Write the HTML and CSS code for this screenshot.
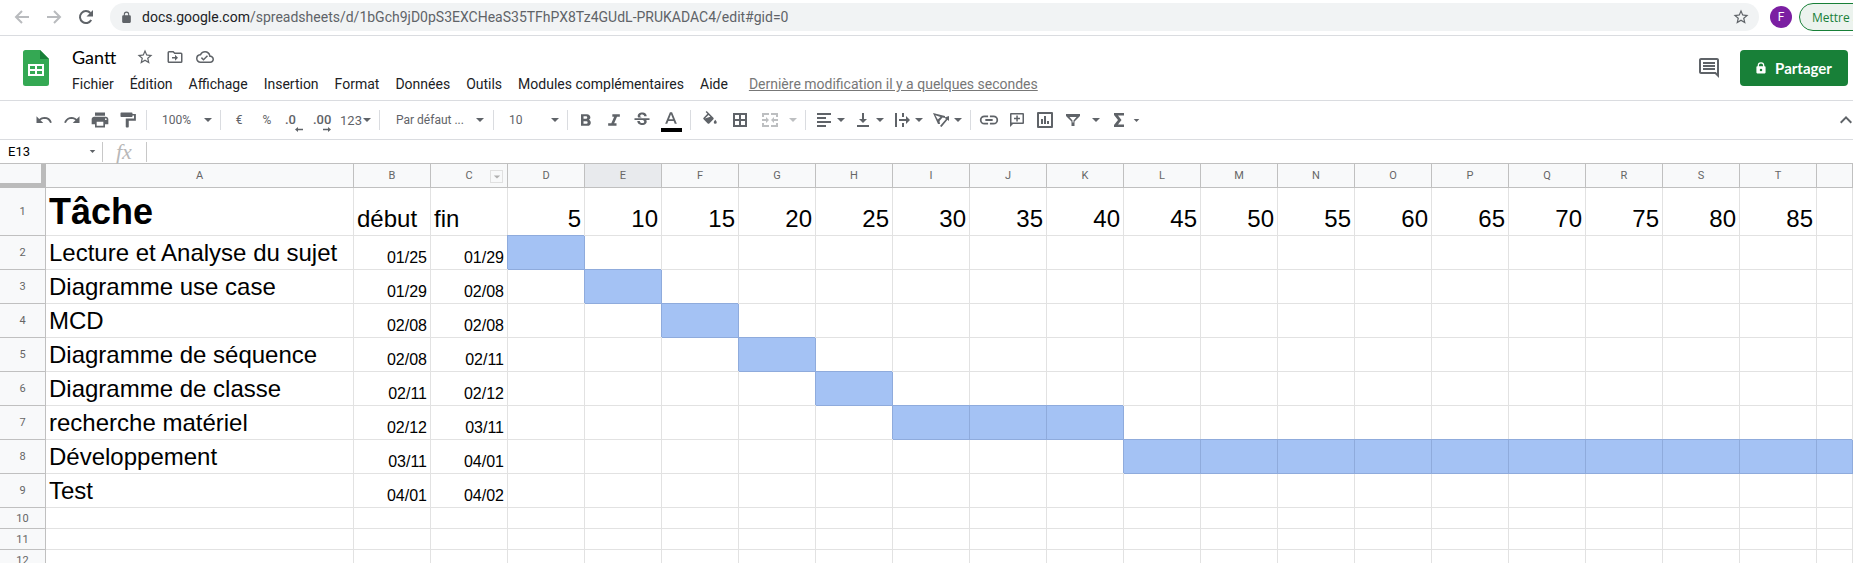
FILE: index.html
```html
<!DOCTYPE html>
<html lang="fr">
<head>
<meta charset="utf-8">
<title>Gantt</title>
<link rel="stylesheet" href="styles.css">
</head>
<body>
<svg class="defs" aria-hidden="true">
  <symbol id="caret" viewBox="0 0 10 10"><path d="M1 3h8L5 7z"/></symbol>
  <symbol id="star" viewBox="0 0 24 24"><path d="M22 9.24l-7.19-.62L12 2 9.19 8.63 2 9.24l5.46 4.73L5.82 21 12 17.27 18.18 21l-1.63-7.03L22 9.24zM12 15.4l-3.76 2.27 1-4.28-3.32-2.88 4.38-.38L12 6.1l1.71 4.04 4.38.38-3.32 2.88 1 4.28L12 15.4z"/></symbol>
  <symbol id="lock" viewBox="0 0 24 24"><path d="M18 8h-1V6A5 5 0 0 0 7 6v2H6a2 2 0 0 0-2 2v10c0 1.1.9 2 2 2h12a2 2 0 0 0 2-2V10a2 2 0 0 0-2-2zM9 6a3 3 0 0 1 6 0v2H9z"/></symbol>
</svg>

<div class="browser">
  <button class="nav nav-off" aria-label="Précédent"><svg viewBox="0 0 16 16"><path class="line" d="M15 8H2M8 2L2 8l6 6"/></svg></button>
  <button class="nav nav-off" aria-label="Suivant"><svg viewBox="0 0 16 16"><path class="line" d="M1 8h13M8 2l6 6-6 6"/></svg></button>
  <button class="nav" aria-label="Actualiser"><svg viewBox="0 0 16 16"><path class="line" d="M13.2 11A6 6 0 1 1 12.4 4"/><path d="M15 1v6.500H8.500z"/></svg></button>
  <div class="address">
    <svg class="address-lock"><use href="#lock"/></svg>
    <span class="url"><b>docs.google.com</b>/spreadsheets/d/1bGch9jD0pS3EXCHeaS35TFhPX8Tz4GUdL-PRUKADAC4/edit#gid=0</span>
    <button class="icon" aria-label="Ajouter aux favoris"><svg class="s18"><use href="#star"/></svg></button>
  </div>
  <button class="avatar">F</button>
  <div class="update-slot"><button class="update">Mettre à jour</button></div>
</div>

<header class="header">
  <svg class="logo" viewBox="0 0 26 36"><path fill="#34a853" d="M2.500 0H17l9 9v24.500a2.500 2.500 0 0 1-2.500 2.500h-21A2.500 2.500 0 0 1 0 33.500v-31A2.500 2.500 0 0 1 2.500 0z"/><path fill="#188038" d="M17 0l9 9h-9z"/><path fill="#fff" fill-rule="evenodd" d="M5 14h16v12H5zM7 16v3h5v-3zM14 16v3h5v-3zM7 21v3h5v-3zM14 21v3h5v-3z"/></svg>
  <div class="doc">
    <div class="title-row">
      <h1 class="title">Gantt</h1>
      <button class="icon" aria-label="Suivre"><svg class="s18"><use href="#star"/></svg></button>
      <button class="icon" aria-label="Déplacer"><svg class="s18" viewBox="0 0 24 24"><path d="M20 6h-8l-2-2H4a2 2 0 0 0-2 2v12c0 1.100.9 2 2 2h16a2 2 0 0 0 2-2V8a2 2 0 0 0-2-2zm0 12H4V6h5.200l2 2H20zM12 17l4-4-4-4v3H8v2h4z"/></svg></button>
      <button class="icon" aria-label="État du document"><svg class="s18" viewBox="0 0 24 24"><path d="M19.350 10.040A7.490 7.490 0 0 0 12 4C9.110 4 6.600 5.640 5.350 8.040A5.994 5.994 0 0 0 0 14c0 3.310 2.690 6 6 6h13c2.760 0 5-2.240 5-5 0-2.640-2.050-4.780-4.650-4.960zM19 18H6c-2.210 0-4-1.790-4-4 0-2.050 1.530-3.760 3.560-3.970l1.070-.11.5-.95A5.469 5.469 0 0 1 12 6c2.620 0 4.880 1.860 5.390 4.430l.3 1.500 1.530.11A2.980 2.980 0 0 1 22 15c0 1.650-1.350 3-3 3zm-9-3.820l-2.090-2.090L6.500 13.500 10 17l6.010-6.010-1.410-1.410z"/></svg></button>
    </div>
    <nav class="menu">
      <button>Fichier</button><button>Édition</button><button>Affichage</button><button>Insertion</button><button>Format</button><button>Données</button><button>Outils</button><button>Modules complémentaires</button><button>Aide</button>
      <a class="history" href="#">Dernière modification il y a quelques secondes</a>
    </nav>
  </div>
  <button class="icon comments" aria-label="Commentaires"><svg class="s24" viewBox="0 0 24 24"><path d="M21.990 4c0-1.100-.89-2-1.990-2H4c-1.100 0-2 .9-2 2v12c0 1.100.9 2 2 2h14l4 4-.01-18zM20 4v13.170L18.830 16H4V4h16zM6 12h12v2H6zm0-3h12v2H6zm0-3h12v2H6z"/></svg></button>
  <button class="share"><svg viewBox="0 0 12 14"><path fill-rule="evenodd" d="M10.500 5H10V4a4 4 0 0 0-8 0v1h-.5A1 1 0 0 0 .5 6v6.500a1 1 0 0 0 1 1h9a1 1 0 0 0 1-1V6a1 1 0 0 0-1-1zM3.500 5V4a2.500 2.500 0 0 1 5 0v1zM6 7.800a1.500 1.500 0 1 1 0 3 1.500 1.500 0 0 1 0-3z"/></svg>Partager</button>
</header>

<div class="toolbar">
  <button class="tool" aria-label="Annuler"><svg class="s18" viewBox="0 0 24 24"><path d="M12.500 8c-2.650 0-5.050.99-6.900 2.600L2 7v9h9l-3.620-3.620A8 8 0 0 1 20.100 16l2.370-.78A10.500 10.500 0 0 0 12.500 8z"/></svg></button>
  <button class="tool" aria-label="Rétablir"><svg class="s18" viewBox="0 0 24 24"><path d="M18.400 10.600A10.480 10.480 0 0 0 1.530 15.220L3.900 16a8 8 0 0 1 12.720-3.620L13 16h9V7z"/></svg></button>
  <button class="tool" aria-label="Imprimer"><svg class="s20" viewBox="0 0 24 24"><path d="M19 8H5c-1.660 0-3 1.340-3 3v6h4v4h12v-4h4v-6c0-1.660-1.340-3-3-3zm-3 11H8v-5h8v5zm3-7a1 1 0 1 1 0-2 1 1 0 0 1 0 2zm-1-9H6v4h12V3z"/></svg></button>
  <button class="tool" aria-label="Reproduire la mise en forme"><svg class="s18" viewBox="0 0 24 24"><path d="M18 4V3a1 1 0 0 0-1-1H3a1 1 0 0 0-1 1v4a1 1 0 0 0 1 1h14a1 1 0 0 0 1-1V6h2v4H9v10.500c0 .8.700 1.500 1.500 1.500h1.500a1 1 0 0 0 1-1v-8h9.500V4z"/></svg></button>
  <span class="divider"></span>
  <label class="pick zoom"><select aria-label="Zoom"><option>100%</option></select><svg class="caret"><use href="#caret"/></svg></label>
  <span class="divider"></span>
  <button class="tool">€</button>
  <button class="tool">%</button>
  <button class="tool decimal" aria-label="Réduire les décimales"><span>.0</span><svg viewBox="0 0 8 5"><path d="M0 2.500L3 0v1.700h5v1.600H3V5z"/></svg></button>
  <button class="tool decimal" aria-label="Ajouter des décimales"><span>.00</span><svg viewBox="0 0 8 5"><path d="M8 2.500L5 0v1.700H0v1.600h5V5z"/></svg></button>
  <button class="tool number">123<svg class="caret"><use href="#caret"/></svg></button>
  <span class="divider"></span>
  <label class="pick font"><select aria-label="Police"><option>Par défaut ...</option></select><svg class="caret"><use href="#caret"/></svg></label>
  <span class="divider"></span>
  <label class="pick size"><select aria-label="Taille"><option>10</option></select><svg class="caret"><use href="#caret"/></svg></label>
  <span class="divider"></span>
  <button class="tool" aria-label="Gras"><svg class="s20" viewBox="0 0 24 24"><path d="M15.600 11.790c.97-.67 1.650-1.770 1.650-2.790 0-2.260-1.750-4-4-4H6v14h8.040c2.090 0 3.710-1.700 3.710-3.790 0-1.520-.86-2.820-2.150-3.420zM9 7.500h3a1.500 1.500 0 0 1 0 3H9v-3zm3.500 9H9v-3h3.500a1.500 1.500 0 0 1 0 3z"/></svg></button>
  <button class="tool" aria-label="Italique"><svg class="s20" viewBox="0 0 24 24"><path d="M10 5v3h2.210l-3.420 8H5v3h10v-3h-2.790l3.420-8H19V5z"/></svg></button>
  <button class="tool" aria-label="Barré"><svg class="s20" viewBox="0 0 24 24"><path d="M7.240 8.750c-.26-.48-.39-1.030-.39-1.670 0-.61.130-1.160.4-1.670.26-.5.630-.93 1.110-1.290.48-.35 1.050-.63 1.700-.83.660-.19 1.390-.29 2.180-.29.810 0 1.540.11 2.210.34.660.22 1.230.54 1.690.94.470.4.830.88 1.080 1.430.25.550.38 1.150.38 1.810h-3.010c0-.31-.05-.59-.15-.85-.09-.27-.24-.49-.44-.68-.2-.19-.45-.33-.75-.44-.3-.1-.66-.16-1.060-.16-.39 0-.74.040-1.030.130-.29.090-.53.210-.72.360-.19.160-.34.340-.44.550-.1.210-.15.430-.15.660 0 .48.250.88.740 1.210.38.250.77.480 1.410.7H7.390c-.05-.08-.11-.17-.15-.25zM21 12v-2H3v2h9.620c.18.070.4.140.55.200.37.170.66.340.87.510.21.170.35.360.43.570.07.200.11.430.11.690 0 .23-.05.450-.14.660-.09.200-.23.380-.42.530-.19.150-.42.260-.71.350-.29.080-.63.130-1.010.13-.43 0-.83-.04-1.180-.13s-.66-.23-.91-.42c-.25-.19-.45-.44-.59-.75-.14-.31-.25-.76-.25-1.210H6.400c0 .55.080 1.130.24 1.580.16.450.37.850.65 1.210.28.350.6.660.98.920.37.260.78.480 1.220.65.440.17.900.3 1.380.39.480.08.960.13 1.440.13.800 0 1.530-.09 2.180-.28s1.210-.45 1.670-.79c.46-.34.820-.77 1.070-1.270s.38-1.070.38-1.710c0-.6-.1-1.140-.31-1.610-.05-.11-.11-.23-.17-.33H21z"/></svg></button>
  <button class="tool color" aria-label="Couleur du texte"><svg class="s20" viewBox="0 0 24 24"><path fill-rule="evenodd" d="M10.700 5h2.600L19 19h-2.500l-1.300-3.400H8.800L7.500 19H5zM9.600 13.500h4.800L12 7.400z"/></svg><i></i></button>
  <span class="divider"></span>
  <button class="tool wide" aria-label="Couleur de remplissage"><svg class="s18" viewBox="0 0 24 24"><path d="M16.560 8.940L7.620 0 6.210 1.410l2.380 2.380-5.150 5.150a1.490 1.490 0 0 0 0 2.120l5.500 5.500c.29.290.68.440 1.060.44s.77-.15 1.060-.44l5.500-5.500c.59-.58.590-1.530 0-2.120zM5.210 10L10 5.210 12.500 7.700zM19 11.500s-2 2.170-2 3.500a2 2 0 0 0 4 0c0-1.330-2-3.500-2-3.500z"/></svg></button>
  <button class="tool wide" aria-label="Bordures"><svg class="s14" viewBox="0 0 14 14"><path fill-rule="evenodd" d="M0 0h14v14H0zM2 2v4h4V2zM8 2v4h4V2zM2 8v4h4V8zM8 8v4h4V8z"/></svg></button>
  <button class="tool wide faded" aria-label="Fusionner"><svg class="s16" viewBox="0 0 16 14"><path d="M0 0h7v2H2v2H0zM9 0h7v4h-2V2H9zM0 10h2v2h5v2H0zM14 10h2v4H9v-2h5zM0 6h4V4l3 3-3 3V8H0zM16 6h-4V4L9 7l3 3V8h4z"/></svg></button>
  <button class="tool narrow faded" aria-label="Types de fusion"><svg class="caret"><use href="#caret"/></svg></button>
  <span class="divider"></span>
  <button class="tool combo" aria-label="Alignement horizontal"><svg class="s20" viewBox="0 0 20 20"><path d="M3 3h14v2H3zM3 7h9v2H3zM3 11h14v2H3zM3 15h9v2H3z"/></svg><svg class="caret"><use href="#caret"/></svg></button>
  <button class="tool combo" aria-label="Alignement vertical"><svg class="s20" viewBox="0 0 20 20"><path d="M4 15h12v2H4zM9 3h2v6h3l-4 4-4-4h3z"/></svg><svg class="caret"><use href="#caret"/></svg></button>
  <button class="tool combo" aria-label="Renvoi à la ligne"><svg class="s20" viewBox="0 0 20 20"><path d="M3 3h2v14H3zM10 3h2v4h-2zM10 13h2v4h-2zM7 9h7V6l4 4-4 4v-3H7z"/></svg><svg class="caret"><use href="#caret"/></svg></button>
  <button class="tool combo" aria-label="Rotation du texte"><svg class="s20" viewBox="0 0 20 20"><path fill-rule="evenodd" d="M2 3l12 3v2l-2.500-.5-3 3.500L9 14H7zM4.300 5.300l2.500 4.200L9.500 7zM9 16l6-7-1.500-1.500L18 6v5l-1.500-1.300L10.500 17z"/></svg><svg class="caret"><use href="#caret"/></svg></button>
  <span class="divider"></span>
  <button class="tool" aria-label="Insérer un lien"><svg class="s22" viewBox="0 0 24 24"><path d="M3.900 12A3.100 3.100 0 0 1 7 8.900h4V7H7a5 5 0 0 0 0 10h4v-1.900H7A3.100 3.100 0 0 1 3.900 12zM8 13h8v-2H8zm9-6h-4v1.900h4a3.100 3.100 0 0 1 0 6.200h-4V17h4a5 5 0 0 0 0-10z"/></svg></button>
  <button class="tool" aria-label="Insérer un commentaire"><svg class="s14" viewBox="0 0 14 14"><path fill-rule="evenodd" d="M1 0h12a1 1 0 0 1 1 1v9a1 1 0 0 1-1 1H3l-3 3V1a1 1 0 0 1 1-1zM1.500 1.500v8h11v-8zM6.300 2.500h1.500v2.300H10v1.500H7.800v2.200H6.300V6.300H4V4.800h2.300z"/></svg></button>
  <button class="tool" aria-label="Insérer un graphique"><svg class="s16" viewBox="0 0 16 16"><path fill-rule="evenodd" d="M1 0h14a1 1 0 0 1 1 1v14a1 1 0 0 1-1 1H1a1 1 0 0 1-1-1V1a1 1 0 0 1 1-1zM2 2v12h12V2zM4 7h2v5H4zM7 4h2v8H7zM10 9h2v3h-2z"/></svg></button>
  <button class="tool" aria-label="Créer un filtre"><svg class="s14" viewBox="0 0 14 14"><path fill-rule="evenodd" d="M0 1h14v2L8.500 8.500V13h-3V8.500L0 3zM3.500 4L6.500 7.500v2h1v-2l3-3.500z"/></svg></button>
  <button class="tool narrow" aria-label="Vues filtrées"><svg class="caret"><use href="#caret"/></svg></button>
  <button class="tool" aria-label="Fonctions"><svg class="s14" viewBox="0 0 14 14"><path d="M2 0h10v2.500H6L9.500 7 6 11.500h6V14H2v-2l4-5-4-5z"/></svg></button>
  <svg class="caret small"><use href="#caret"/></svg>
  <button class="tool collapse" aria-label="Masquer les menus"><svg viewBox="0 0 12 8"><path d="M1.400 7.400L6 2.800l4.600 4.600L12 6 6 0 0 6z"/></svg></button>
</div>

<div class="formula">
  <input class="name-box" aria-label="Zone de nom" value="E13">
  <svg class="caret small"><use href="#caret"/></svg>
  <span class="fx">fx</span>
  <input class="formula-input" aria-label="Formule">
</div>

<table class="sheet">
  <colgroup><col class="c-row"><col class="c-task"><col class="c" span="19"><col></colgroup>
  <thead>
    <tr><th class="corner"></th><th>A</th><th>B</th><th class="has-menu">C<button class="col-menu" aria-label="Menu de la colonne C"><svg class="caret"><use href="#caret"/></svg></button></th><th>D</th><th class="active">E</th><th>F</th><th>G</th><th>H</th><th>I</th><th>J</th><th>K</th><th>L</th><th>M</th><th>N</th><th>O</th><th>P</th><th>Q</th><th>R</th><th>S</th><th>T</th><th></th></tr>
  </thead>
  <tbody>
    <tr class="head"><th>1</th><td class="heading">Tâche</td><td class="label">début</td><td class="label">fin</td><td>5</td><td>10</td><td>15</td><td>20</td><td>25</td><td>30</td><td>35</td><td>40</td><td>45</td><td>50</td><td>55</td><td>60</td><td>65</td><td>70</td><td>75</td><td>80</td><td>85</td><td></td></tr>
    <tr class="task"><th>2</th><td>Lecture et Analyse du sujet</td><td>01/25</td><td>01/29</td><td class="on"></td><td></td><td></td><td></td><td></td><td></td><td></td><td></td><td></td><td></td><td></td><td></td><td></td><td></td><td></td><td></td><td></td><td></td></tr>
    <tr class="task"><th>3</th><td>Diagramme use case</td><td>01/29</td><td>02/08</td><td></td><td class="on"></td><td></td><td></td><td></td><td></td><td></td><td></td><td></td><td></td><td></td><td></td><td></td><td></td><td></td><td></td><td></td><td></td></tr>
    <tr class="task"><th>4</th><td>MCD</td><td>02/08</td><td>02/08</td><td></td><td></td><td class="on"></td><td></td><td></td><td></td><td></td><td></td><td></td><td></td><td></td><td></td><td></td><td></td><td></td><td></td><td></td><td></td></tr>
    <tr class="task"><th>5</th><td>Diagramme de séquence</td><td>02/08</td><td>02/11</td><td></td><td></td><td></td><td class="on"></td><td></td><td></td><td></td><td></td><td></td><td></td><td></td><td></td><td></td><td></td><td></td><td></td><td></td><td></td></tr>
    <tr class="task"><th>6</th><td>Diagramme de classe</td><td>02/11</td><td>02/12</td><td></td><td></td><td></td><td></td><td class="on"></td><td></td><td></td><td></td><td></td><td></td><td></td><td></td><td></td><td></td><td></td><td></td><td></td><td></td></tr>
    <tr class="task"><th>7</th><td>recherche matériel</td><td>02/12</td><td>03/11</td><td></td><td></td><td></td><td></td><td></td><td class="on"></td><td class="on"></td><td class="on"></td><td></td><td></td><td></td><td></td><td></td><td></td><td></td><td></td><td></td><td></td></tr>
    <tr class="task"><th>8</th><td>Développement</td><td>03/11</td><td>04/01</td><td></td><td></td><td></td><td></td><td></td><td></td><td></td><td></td><td class="on"></td><td class="on"></td><td class="on"></td><td class="on"></td><td class="on"></td><td class="on"></td><td class="on"></td><td class="on"></td><td class="on"></td><td class="on"></td></tr>
    <tr class="task"><th>9</th><td>Test</td><td>04/01</td><td>04/02</td><td></td><td></td><td></td><td></td><td></td><td></td><td></td><td></td><td></td><td></td><td></td><td></td><td></td><td></td><td></td><td></td><td></td><td></td></tr>
    <tr><th>10</th><td></td><td></td><td></td><td></td><td></td><td></td><td></td><td></td><td></td><td></td><td></td><td></td><td></td><td></td><td></td><td></td><td></td><td></td><td></td><td></td><td></td></tr>
    <tr><th>11</th><td></td><td></td><td></td><td></td><td></td><td></td><td></td><td></td><td></td><td></td><td></td><td></td><td></td><td></td><td></td><td></td><td></td><td></td><td></td><td></td><td></td></tr>
    <tr><th>12</th><td></td><td></td><td></td><td></td><td></td><td></td><td></td><td></td><td></td><td></td><td></td><td></td><td></td><td></td><td></td><td></td><td></td><td></td><td></td><td></td><td></td></tr>
  </tbody>
</table>
</body>
</html>
```

FILE: styles.css
```css
* { box-sizing: border-box; }
body {
  margin: 0;
  height: 100vh;
  overflow: hidden;
  background: #fff;
  color: #202124;
  font-family: Roboto, "Liberation Sans", sans-serif;
}
button, input, select {
  margin: 0;
  padding: 0;
  border: 0;
  background: none;
  color: inherit;
  font: inherit;
  appearance: none;
}
svg { display: block; flex: none; fill: currentColor; }
.defs { display: none; }
.s14 { width: 14px; height: 14px; }
.s16 { width: 16px; height: 16px; }
.s18 { width: 18px; height: 18px; }
.s20 { width: 20px; height: 20px; }
.s22 { width: 22px; height: 22px; }
.s24 { width: 24px; height: 24px; }
.icon { display: flex; color: #5f6368; }
.caret { width: 10px; height: 10px; }
.caret.small { width: 7px; height: 7px; color: #5f6368; }

/* Browser bar */
.browser {
  display: flex;
  align-items: center;
  height: 36px;
  padding: 0 0 1px 14px;
  border-bottom: 1px solid #dadce0;
}
.nav { width: 16px; margin-right: 16px; color: #5f6368; }
.nav-off { color: #b9bbbe; }
.nav svg { width: 16px; height: 16px; }
.line { fill: none; stroke: currentColor; stroke-width: 2; }
.address {
  display: flex;
  flex: 1;
  align-items: center;
  height: 28px;
  margin-right: 11px;
  padding: 0 9px 0 10px;
  border-radius: 14px;
  background: #f1f3f4;
}
.address-lock { width: 13px; height: 13px; margin-right: 9px; color: #5f6368; }
.url { flex: 1; font-size: 14px; line-height: 20px; color: #5f6368; white-space: nowrap; }
.url b { font-weight: 400; color: #202124; }
.avatar {
  width: 22px;
  height: 22px;
  margin-right: 7px;
  border-radius: 50%;
  background: #7b1fa2;
  color: #fff;
  font-size: 12px;
}
.update-slot { width: 54px; overflow: hidden; }
.update {
  display: block;
  height: 28px;
  padding: 0 12px;
  border: 1px solid #188038;
  border-radius: 14px;
  background: #ecf3ee;
  color: #188038;
  font: 12px "Open Sans", sans-serif;
  white-space: nowrap;
}

/* Document header */
.header {
  display: flex;
  align-items: flex-start;
  height: 65px;
  padding: 14px 5px 0 23px;
  border-bottom: 1px solid #dadce0;
}
.logo { width: 26px; height: 36px; margin-right: 23px; }
.doc { flex: 1; margin-top: -5px; }
.title-row { display: flex; align-items: center; gap: 12px; height: 24px; }
.title { margin: 0 8px 0 0; font: 18px Lato, sans-serif; color: #000; }
.menu { display: flex; align-items: center; gap: 16px; height: 30px; font-size: 14px; white-space: nowrap; }
.history { margin-left: 5px; color: #777; }
.comments { margin: 6px 19px 0 0; }
.share {
  display: flex;
  align-items: center;
  justify-content: center;
  gap: 9px;
  width: 108px;
  height: 36px;
  border-radius: 4px;
  background: #188038;
  color: #fff;
  font: bold 15px Lato, sans-serif;
}
.share svg { width: 10px; height: 12px; }

/* Toolbar */
.toolbar {
  display: flex;
  align-items: center;
  height: 39px;
  padding-left: 30px;
  border-bottom: 1px solid #dadce0;
  color: #5f6368;
  font-size: 12px;
}
.divider { flex: none; width: 1px; height: 20px; margin: 0 4px; background: #dadce0; }
.tool { display: flex; flex: none; align-items: center; justify-content: center; width: 28px; height: 26px; }
.wide { width: 30px; }
.narrow { width: 18px; }
.narrow.faded { width: 16px; }
.faded { color: #bdbfc1; }
.number { width: 38px; font-size: 13px; }
.combo { width: 39px; gap: 2px; }
.decimal { flex-direction: column; align-items: flex-start; padding: 4px 6px 0 4px; font-size: 13px; font-weight: 500; line-height: 14px; }
.decimal svg { align-self: flex-end; width: 8px; height: 5px; }
.pick { display: flex; flex: none; align-items: center; }
.pick select { flex: 1; min-width: 0; height: 24px; }
.pick .caret { pointer-events: none; }
.zoom { width: 65px; padding: 0 3px 0 11px; }
.font { width: 105px; padding: 0 4px 0 12px; }
.size { width: 65px; padding: 0 3px 0 11px; }
.color { flex-direction: column; width: 30px; }
.color i { width: 21px; height: 4px; background: #000; }
.collapse { width: 12px; margin-left: auto; margin-right: 1px; }
.collapse svg { width: 12px; height: 8px; }

/* Formula bar */
.formula { display: flex; align-items: center; height: 24px; border-bottom: 1px solid #c0c0c0; }
.name-box { width: 89px; padding-left: 8px; color: #000; font-size: 13px; }
.formula .caret { margin-right: 6px; }
.fx {
  display: flex;
  align-items: center;
  height: 20px;
  padding: 0 14px 0 13px;
  border: solid #c8c8c8;
  border-width: 0 1px;
  color: #b8b8b8;
  font: italic 22px "Liberation Serif", serif;
}
.formula-input { flex: 1; height: 20px; padding-left: 6px; }

/* Sheet */
.sheet { width: 100%; table-layout: fixed; border-collapse: separate; border-spacing: 0; font-family: "Liberation Sans", Arial, sans-serif; color: #000; }
.c-row { width: 46px; }
.c-task { width: 308px; }
.c { width: 77px; }
.sheet th {
  padding: 0;
  border: solid #c0c0c0;
  border-width: 0 1px 1px 0;
  background: #f8f9fa;
  color: #666;
  font: 11px Roboto, sans-serif;
}
.sheet thead tr { height: 24px; }
.sheet .corner { border-width: 0 5px 5px 0; border-color: #bbb; }
.sheet .active { background: #e8eaed; }
.has-menu { position: relative; }
.col-menu {
  position: absolute;
  right: 4px;
  top: 6px;
  display: grid;
  place-items: center;
  width: 13px;
  height: 13px;
  border: 1px solid #e0e0e0;
  color: #b0b0b0;
}
.col-menu .caret { width: 8px; height: 8px; }
.sheet td {
  padding: 0 3px 2px;
  border: solid #e2e2e2;
  border-width: 0 1px 1px 0;
  vertical-align: bottom;
  text-align: right;
  white-space: nowrap;
}
.sheet tbody tr { height: 21px; }
.sheet tbody .head { height: 48px; }
.sheet tbody .task { height: 34px; }
.head td { font-size: 24px; }
.head .label { text-align: left; }
.head .heading { font-size: 36px; font-weight: 700; text-align: left; }
.task td { font-size: 16px; }
.task td:nth-child(2) { font-size: 24px; text-align: left; }
.sheet .on { border-color: #8fabdc; background: #a4c2f4; box-shadow: -1px -1px 0 #8fabdc; }
```
